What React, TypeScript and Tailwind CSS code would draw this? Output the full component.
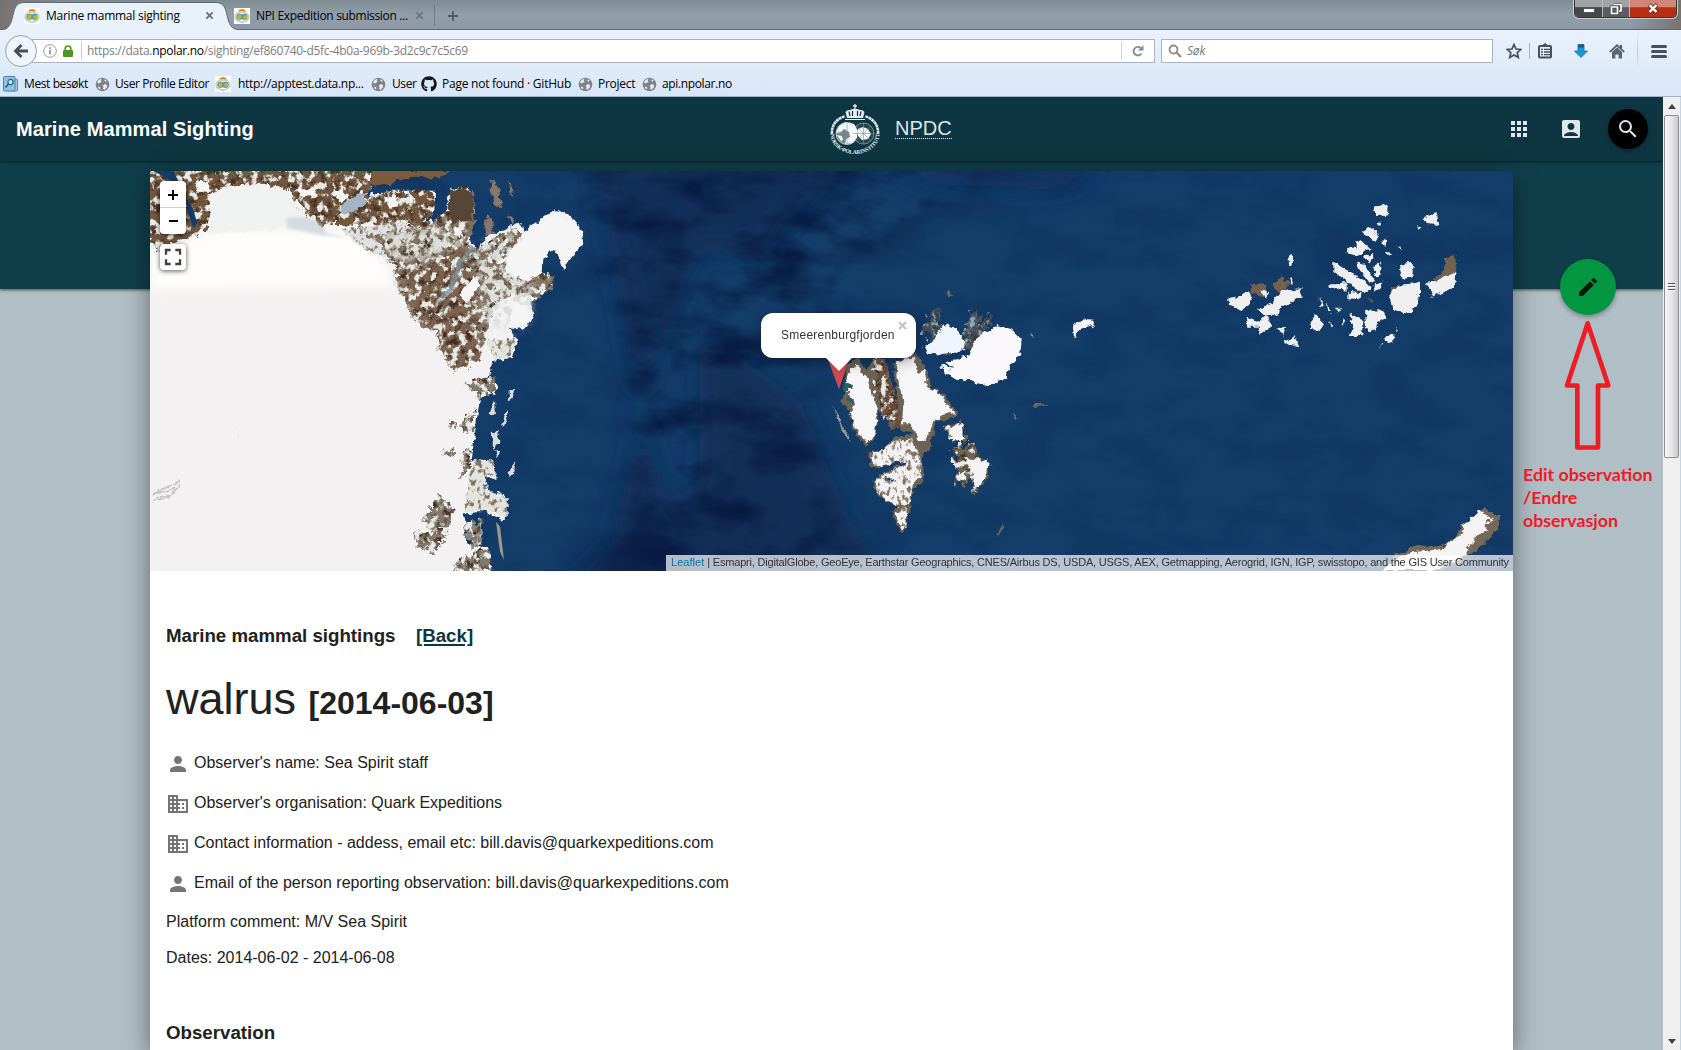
import React from "react";
import { MdPerson, MdBusiness, MdApps, MdAccountBox, MdSearch, MdEdit, MdFullscreen } from "react-icons/md";
import { FaGithub } from "react-icons/fa";

const Crest = () => (
  <svg viewBox="0 0 16 16" className="h-4 w-4 shrink-0">
    <rect width="16" height="16" fill="#fff" />
    <path d="M5 4.5L4.5 2 8 1l3.5 1L11 4.5z" fill="#c98d2c" />
    <path d="M2 12C-1 6 4 3.5 8 3.8S17 6 14 12" fill="none" stroke="#d8cfa0" strokeWidth="1.6" />
    <path d="M2 11.500Q8 17 14 11.500" fill="none" stroke="#b9bdbd" strokeWidth="1.200" />
    <circle cx="5.500" cy="8.800" r="3.200" fill="#4f9fc0" />
    <circle cx="10.500" cy="8.800" r="3.200" fill="#4f9fc0" />
    <path d="M4 7l3-.5.5 3-2 2-2-1zM9 9l2-2 2 1-.5 2.500-2 .5z" fill="#d5b21f" />
  </svg>
);

const Globe = () => (
  <svg viewBox="0 0 16 16" className="h-[15px] w-[15px] shrink-0">
    <circle cx="8" cy="8" r="7.300" fill="#7f8488" />
    <path d="M2.500 4.500l3-2.500 1.500.5-1 1.500 1 1-2 1.500-2 .5zM9 8.500l2-1 2 1.500-.5 2.500-2.500 2-1.500-1 .8-1.800-1-.8zM10.500 2.500l2 1.500-1 1-1.500-1zM3 10l2.500 1v2l-1.500-.5z" fill="#e9eef3" />
  </svg>
);

const CloseX = () => (
  <svg viewBox="0 0 10 10" className="h-[9px] w-[9px] shrink-0">
    <path d="M1.500 1.500l7 7M8.500 1.500l-7 7" stroke="#6b7681" strokeWidth="2.200" />
  </svg>
);

function TabStrip() {
  return (
    <div className="relative flex h-[30px] items-start bg-linear-to-b from-[#7f8b91] via-[#929eaa] to-[#8c98a4]">
      <svg viewBox="0 0 1681 30" className="absolute inset-0 h-[30px] w-[1681px]">
        <defs>
          <linearGradient id="edge">
            <stop offset="0" stopColor="#77726f" />
            <stop offset="1" stopColor="#77726f" stopOpacity="0" />
          </linearGradient>
        </defs>
        <rect width="70" height="30" fill="url(#edge)" />
        <rect x="-1681" width="50" height="30" fill="url(#edge)" transform="scale(-1 1)" />
        <path d="M0 29.500H1681" stroke="#5f686f" />
        <path d="M0 30.500C10 29.500 11 23 13 15C15 6 17 2.500 25 2.500H215C223 2.500 225 6 227 15C229 24 231 29.500 239 29.500V31H0Z" fill="#e9f1fb" stroke="#5f6b76" />
      </svg>
      <div className="relative flex h-[30px] w-[434px] items-center pl-6 pt-px text-[12px]">
        <Crest />
        <span className="ml-[6px] w-[159px] whitespace-nowrap tracking-[-0.25px]">Marine mammal sighting</span>
        <CloseX />
        <div className="ml-5 flex items-center">
          <Crest />
          <span className="ml-[6px] w-[159px] whitespace-nowrap tracking-[-0.33px]">NPI Expedition submission ...</span>
          <CloseX />
        </div>
      </div>
      <div className="relative mt-[5px] h-[21px] w-px bg-[#6f7a85]" />
      <svg viewBox="0 0 10 10" className="relative ml-[13px] mt-[11px] h-[10px] w-[10px]">
        <path d="M5 0v10M0 5h10" stroke="#4f5a65" strokeWidth="1.800" />
      </svg>
      <div className="absolute right-[4px] top-0 flex h-[18px] w-[103px] overflow-hidden rounded-b-[5px] border border-t-0 border-[#33363a] shadow-[0_0_0_1px_#c5ccd2]">
        <div className="flex w-[28px] items-end justify-center border-r border-[#b9bcbf] bg-linear-to-b from-[#a0a3a6] from-40% to-[#45484b] to-45% pb-[4px]">
          <div className="h-[5px] w-[12px] border border-[#555] bg-white" />
        </div>
        <div className="flex w-[27px] items-center justify-center border-r border-[#b9bcbf] bg-linear-to-b from-[#a0a3a6] from-40% to-[#5b5e61] to-45%">
          <svg viewBox="0 0 12 12" className="h-3 w-3">
            <path d="M4 1h7v7h-2M1 4h7v7H1z" fill="none" stroke="#444" strokeWidth="2.800" />
            <path d="M4 1.500h7v6.500h-2M1.500 4h6v6.500h-6z" fill="none" stroke="#fff" strokeWidth="1.700" />
          </svg>
        </div>
        <div className="flex flex-1 items-center justify-center bg-linear-to-b from-[#d08778] from-40% to-[#b92d12] to-45%">
          <svg viewBox="0 0 12 11" className="h-[11px] w-3">
            <path d="M2 1.500l8 8M10 1.500l-8 8" stroke="#543" strokeWidth="4" />
            <path d="M2.500 2l7 7M9.500 2l-7 7" stroke="#fff" strokeWidth="2.400" />
          </svg>
        </div>
      </div>
    </div>
  );
}

function NavBar() {
  return (
    <div className="flex h-[41px] items-center pr-[14px] pt-px">
      <div className="relative z-10 ml-[5px] flex h-8 w-8 shrink-0 items-center justify-center rounded-full border border-[#8ea1b8] bg-[#f0f5fc]">
        <svg viewBox="0 0 16 16" className="h-4 w-4">
          <path d="M15 8H3M8.500 2L2.500 8l6 6" fill="none" stroke="#44505c" strokeWidth="2.800" />
        </svg>
      </div>
      <div className="-ml-[5px] flex h-6 w-[1123px] items-center border border-[#a5b6cb] bg-white pl-[10px]">
        <svg viewBox="0 0 14 14" className="h-[14px] w-[14px] shrink-0">
          <circle cx="7" cy="7" r="6.300" fill="none" stroke="#999" />
          <path d="M7 6v4.500M7 3.300v1.600" stroke="#888" strokeWidth="1.600" />
        </svg>
        <svg viewBox="0 0 10 12" className="ml-[6px] h-3 w-[10px] shrink-0">
          <path d="M2.200 6V3.500a2.800 2.500 0 0 1 5.600 0V6" fill="none" stroke="#4a9a1e" strokeWidth="1.700" />
          <rect y="5" width="10" height="7" rx="1" fill="#4a9a1e" />
        </svg>
        <div className="ml-2 h-[18px] w-px bg-[#ccc]" />
        <span className="ml-[5px] flex-1 whitespace-nowrap text-[12px] tracking-[-0.3px] text-[#7d7d7d]">
          https://data.<span className="text-black">npolar.no</span>/sighting/ef860740-d5fc-4b0a-969b-3d2c9c7c5c69
        </span>
        <div className="h-[18px] w-px bg-[#ccd3da]" />
        <svg viewBox="0 0 12 12" className="mx-[10px] h-3 w-3">
          <path d="M9.500 8.500A4.300 4.300 0 1 1 9 3.200" fill="none" stroke="#7f8c99" strokeWidth="1.900" />
          <path d="M11.500 0v5.500H6z" fill="#7f8c99" />
        </svg>
      </div>
      <div className="ml-[6px] flex h-6 w-[332px] items-center border border-[#a5b6cb] bg-white pl-[6px]">
        <svg viewBox="0 0 14 14" className="h-[14px] w-[14px]">
          <circle cx="5.500" cy="5.500" r="4" fill="none" stroke="#8b8b8b" strokeWidth="1.800" />
          <path d="M8.500 8.500l4.500 4.500" stroke="#8b8b8b" strokeWidth="2.200" />
        </svg>
        <span className="ml-[5px] text-[12px] italic tracking-[-0.2px] text-[#777]">Søk</span>
      </div>
      <svg viewBox="0 0 16 16" className="ml-[13px] h-4 w-4">
        <path d="M8 1.500l2 4.500 4.800.5-3.600 3.200 1.100 4.800L8 12l-4.300 2.500 1.100-4.800L1.200 6.500 6 6z" fill="none" stroke="#44505c" strokeWidth="1.700" />
      </svg>
      <div className="ml-[7px] h-4 w-px bg-[#a9b5c3]" />
      <svg viewBox="0 0 14 16" className="ml-[8px] h-4 w-[14px]">
        <path d="M4.500 3V2L7 0l2.500 2v1z" fill="#44505c" />
        <rect x="1" y="3" width="12" height="11.500" rx="1" fill="none" stroke="#44505c" strokeWidth="2" />
        <path d="M3 6.300h2M6 6.300h6M3 9h2M6 9h6M3 11.700h2M6 11.700h6" stroke="#44505c" strokeWidth="1.300" />
      </svg>
      <svg viewBox="0 0 14 14" className="ml-[22px] h-[14px] w-[14px]">
        <path d="M4 .5h6V7h3.500L7 13.500.5 7H4z" fill="#149ad9" stroke="#17719f" strokeWidth=".8" />
        <path d="M4 .5h6v3H4z" fill="#11617f" />
      </svg>
      <svg viewBox="0 0 16 15" className="ml-[21px] h-[15px] w-4">
        <path d="M.8 8L8 1.200 15.200 8" fill="none" stroke="#4c5864" strokeWidth="1.700" />
        <path d="M3 8l5-4.700L13 8v6.500H9.600v-4H6.400v4H3z" fill="#5a6672" />
        <path d="M11 1h2v3h-2z" fill="#4c5864" />
      </svg>
      <div className="ml-[12px] h-[38px] w-px bg-linear-to-b from-transparent via-[#b9c6d6] to-transparent" />
      <div className="ml-[13px] flex w-4 flex-col gap-[2px]">
        <div className="h-[3px] rounded-full bg-[#44505c]" />
        <div className="h-[3px] rounded-full bg-[#44505c]" />
        <div className="h-[3px] rounded-full bg-[#44505c]" />
      </div>
    </div>
  );
}

function Bookmarks() {
  return (
    <div className="flex h-[26px] items-center whitespace-nowrap pl-[3px] text-[12px] tracking-[-0.26px]">
      <svg viewBox="0 0 15 16" className="h-4 w-[15px] shrink-0">
        <rect x="4" y="3" width="10.500" height="12" rx="1" fill="#9fc4df" stroke="#5d92b8" />
        <rect x=".5" y=".5" width="11.500" height="14.500" rx="1" fill="#8fc3e4" stroke="#4a85ae" />
        <circle cx="7.500" cy="6" r="2.600" fill="#cfe8f8" stroke="#2d6288" strokeWidth="1.200" />
        <path d="M5.500 8L2.500 11.500" stroke="#2d6288" strokeWidth="1.700" />
      </svg>
      <span className="ml-[6px] w-[71px] tracking-[-0.4px]">Mest besøkt</span>
      <Globe />
      <span className="ml-[5px] w-[100px] tracking-[-0.42px]">User Profile Editor</span>
      <Crest />
      <span className="ml-[7px] w-[133px] tracking-[-0.3px]">http://apptest.data.np...</span>
      <Globe />
      <span className="ml-[6px] w-[29px] tracking-[-0.4px]">User</span>
      <FaGithub className="h-4 w-4 shrink-0 text-[#191717]" />
      <span className="ml-[5px] w-[136px] tracking-[-0.24px]">Page not found · GitHub</span>
      <Globe />
      <span className="ml-[5px] w-[44px]">Project</span>
      <Globe />
      <span className="ml-[5px] tracking-[-0.36px]">api.npolar.no</span>
    </div>
  );
}

const Emblem = () => (
  <svg viewBox="0 0 50 52" className="h-[52px] w-[50px] overflow-visible">
    <path d="M25 1v6M23 3h4" stroke="#e6eced" strokeWidth="1.300" />
    <path d="M17 15L15.500 9Q17 6.500 20 7Q25 4.500 30 7Q33 6.500 34.500 9L33 15z" fill="#e6eced" />
    <path d="M19 8.500l1 4.500M22.500 8v5M27.500 8v5M31 8.500l-1 4.500" stroke="#0d3642" strokeWidth="1.200" />
    <path d="M2 31C1 22 8 14.500 15 13.500M48 31C49 22 42 14.500 35 13.500" fill="none" stroke="#dde5e7" strokeWidth="2.600" strokeDasharray="3 .4" />
    <path d="M15 16.500h20" stroke="#e6eced" />
    <circle cx="17" cy="30.500" r="11" fill="#6d868d" stroke="#dfe6e8" strokeWidth=".8" />
    <circle cx="33.500" cy="30.500" r="10.500" fill="#24474f" stroke="#8ea3a8" strokeWidth=".8" />
    <path d="M9 23L15 19.500l9 1.500 4 7-1 7-5 5-7 1 1-5 4-2-1-5-5-3-3 3-5 1zM7 32l5 1 1 4-2 1z" fill="#f6f8f8" />
    <path d="M28 26l5-2 5 2 3 5-3 5-6 1-4-4z" fill="#f6f8f8" />
    <path d="M33.500 20v21M23 30.500h21M26 23l15 15M41 23l-15 15M17 20v21M6 30.500h11" stroke="#7d969c" strokeWidth=".6" />
    <path id="ring" d="M.5 31A24.500 20 0 0 0 49.500 31" fill="none" />
    <text fill="#e6eced" fontFamily="Liberation Serif" fontWeight="bold" fontSize="5.600" textLength="70">
      <textPath href="#ring">NORSK•POLARINSTITUTT</textPath>
    </text>
  </svg>
);

function SatelliteMap() {
  return (
    <svg viewBox="150 171 1363 400" className="absolute inset-0 h-[400px] w-[1363px]">
      <defs>
        <filter id="coast" x="-8%" y="-8%" width="116%" height="116%" colorInterpolationFilters="sRGB">
          <feTurbulence type="fractalNoise" baseFrequency=".05" numOctaves="3" seed="4" result="n" />
          <feDisplacementMap in="SourceGraphic" in2="n" scale="22" xChannelSelector="R" yChannelSelector="G" result="d" />
          <feGaussianBlur in="d" stdDeviation="1.200" />
        </filter>
        <filter id="rock" x="-10%" y="-10%" width="120%" height="120%" colorInterpolationFilters="sRGB">
          <feTurbulence type="fractalNoise" baseFrequency=".045" numOctaves="4" seed="9" result="n" />
          <feDisplacementMap in="SourceGraphic" in2="n" scale="50" xChannelSelector="R" yChannelSelector="G" result="d" />
          <feColorMatrix in="n" values="0 0 0 0 .9  0 0 0 0 .92  0 0 0 0 .91  7 0 0 0 -3.600" result="w" />
          <feComposite in="w" in2="d" operator="in" result="wi" />
          <feColorMatrix in="n" values="0 0 0 0 .27  0 0 0 0 .18  0 0 0 0 .12  0 4 0 0 -1.900" result="k" />
          <feComposite in="k" in2="d" operator="in" result="ki" />
          <feMerge><feMergeNode in="d" /><feMergeNode in="ki" /><feMergeNode in="wi" /></feMerge>
        </filter>
        <filter id="mist" x="-10%" y="-10%" width="120%" height="120%" colorInterpolationFilters="sRGB">
          <feTurbulence type="fractalNoise" baseFrequency=".05" numOctaves="4" seed="31" result="n" />
          <feColorMatrix in="n" values="0 0 0 0 .85  0 0 0 0 .87  0 0 0 0 .86  6 0 0 0 -2.500" result="w" />
          <feGaussianBlur in="SourceGraphic" stdDeviation="14" result="s" />
          <feComposite in="w" in2="s" operator="in" />
        </filter>
        <filter id="snow" x="-10%" y="-10%" width="120%" height="120%" colorInterpolationFilters="sRGB">
          <feTurbulence type="fractalNoise" baseFrequency=".07 .05" numOctaves="4" seed="21" result="n" />
          <feDisplacementMap in="SourceGraphic" in2="n" scale="22" xChannelSelector="R" yChannelSelector="G" result="d" />
          <feColorMatrix in="n" values="0 0 0 0 .5  0 0 0 0 .45  0 0 0 0 .39  0 6 0 0 -3.100" result="k" />
          <feComposite in="k" in2="d" operator="in" result="ki" />
          <feMerge><feMergeNode in="d" /><feMergeNode in="ki" /></feMerge>
        </filter>
        <filter id="sea" x="0" y="0" width="100%" height="100%" colorInterpolationFilters="sRGB">
          <feTurbulence type="fractalNoise" baseFrequency=".016 .03" numOctaves="4" seed="3" />
          <feColorMatrix values="0 0 0 0 .02  0 0 0 0 .09  0 0 0 0 .24  2.500 0 0 0 -1.050" />
        </filter>
        <filter id="b14" x="-50%" y="-50%" width="200%" height="200%"><feGaussianBlur stdDeviation="14" /></filter>
        <filter id="b6" x="-50%" y="-50%" width="200%" height="200%"><feGaussianBlur stdDeviation="5" /></filter>
        <mask id="deep"><rect x="150" y="171" width="1363" height="400" fill="#2a2a2a" /><path d="M570 160H1000L860 260 800 400 850 571H620L640 400z" fill="#ddd" filter="url(#b14)" /></mask>
      </defs>
      <rect x="150" y="171" width="1363" height="400" fill="#143d6a" />
      <g filter="url(#b14)">
        <path d="M590 150H870L800 210 760 260 700 250 640 400 690 590H600L640 420 620 300z" fill="#0c2a56" opacity=".7" />
        <path d="M700 330L800 400 850 520 900 590H580L700 480z" fill="#0b2750" opacity=".6" />
        <path d="M880 160H1110L1060 190 930 185z" fill="#0d2b58" opacity=".8" />
        <path d="M560 590L640 520 740 600z" fill="#0a2248" opacity=".8" />
      </g>
      <rect x="150" y="171" width="1363" height="400" filter="url(#sea)" mask="url(#deep)" />
      <g transform="translate(140 160) scale(.33333)">
        <path filter="url(#coast)" fill="#f3f1f1" d="M0 0H690L690 80L680 115L740 95H885L883 150L835 205L860 205L920 155L930 90L990 80L1003 130L1000 180L985 240L1015 265L1035 235L1100 205L1140 190L1150 215L1200 180L1250 150L1290 165L1325 210L1330 250L1285 300L1270 330L1255 285L1240 265L1210 300L1208 335L1235 350L1238 380L1200 410L1165 430L1183 460L1165 500L1110 510L1132 540L1115 595L1060 600L1045 650L1070 675L1065 700L1020 715L1010 780L995 900L1060 905L1073 960L1030 940L1040 980L1060 1005L1075 995L1100 1015V1070L1085 1080L1040 1055L975 1060L970 1110L980 1150L1045 1165L1055 1270H0z" />
        <path fill="#fffdfb" d="M240 210H640L740 320 760 380 30 390V270z" filter="url(#b14)" />
        <path filter="url(#rock)" fill="#72563d" d="M0 0H690V80L680 120L740 95H880V155L835 205 760 190 640 195 530 190 480 140 440 85 350 75 210 100 205 200 140 235 60 270 20 250z" />
        <path d="M230 85Q330 60 440 95L480 160 400 210 200 220z" fill="#eff2f1" filter="url(#coast)" />
        <path d="M600 210L760 190 830 205 820 260 740 290 690 280z" fill="#dfe2e0" filter="url(#snow)" />
        <path d="M40 33H100L160 150 172 190 160 205 145 160 130 100 90 60z" fill="#143c69" />
        <path d="M440 175Q540 160 560 220L640 235 540 225 440 205z" fill="#c5d3d8" opacity=".7" filter="url(#b6)" />
        <path d="M605 130L680 95 670 140 610 165z" fill="#a3b4c4" filter="url(#coast)" />
        <path filter="url(#coast)" fill="#f6f6f6" d="M470 85L530 85 520 110 490 115zM165 65L205 60 215 95 175 95z" />
        <path filter="url(#rock)" fill="#83725f" d="M700 230L840 200 930 150 935 90 995 85 1003 180 980 260 1020 270 1100 210 1150 220 1080 300 1120 330 1240 350 1235 385 1180 415 1120 400 1060 430 1040 520 1020 600 940 635 900 570 890 510 830 490 780 400 760 320z" />
        <path filter="url(#coast)" fill="#574536" d="M925 95L990 85 1003 130 995 185 960 180 930 195z" />
        <path filter="url(#rock)" fill="#7a5a45" d="M790 320L860 315 960 260 1000 400 1020 590 940 630 900 570 890 510 840 480 790 400z" opacity=".6" />
        <path filter="url(#mist)" fill="#fff" d="M720 215L900 200 980 240 900 290 760 300zM1010 260L1130 220 1180 400 1160 500 1040 500 1020 380z" />
        <path d="M1000 260L960 310 930 390 900 420" stroke="#8094a3" strokeWidth="14" fill="none" filter="url(#coast)" opacity=".8" />
        <path filter="url(#coast)" fill="#f5f5f5" d="M1110 270L1150 235 1250 155 1325 215 1325 250 1285 295 1235 260 1205 300 1200 345 1160 365 1090 330zM960 400L1000 350 1025 370 980 430zM1120 430L1165 440 1170 490 1110 495zM735 115L760 100 780 130 750 150zM575 95L610 85 625 110 600 125zM940 205L960 200 970 225 950 235z" />
        <path filter="url(#coast)" fill="#7b5b3a" d="M690 30H935L905 52 790 55 750 72 692 75z" />
        <path filter="url(#snow)" fill="#e4e4df" d="M1040 540L1130 535 1112 590 1060 600zM1005 900H1060L1070 955 1030 945 1040 990 1100 1015V1070L1040 1050 975 1055 985 960z" />
        <path filter="url(#rock)" fill="#847a6c" d="M970 670L1060 650 1070 690 1020 712zM925 790L945 780 940 815zM960 790L1005 755 995 810 965 820zM905 865L945 870 940 895 915 890zM975 870L995 855 985 940 955 965zM870 1040L900 1005 935 1040 930 1100 880 1110 845 1085zM820 1130L880 1110 920 1120 880 1180 830 1160zM950 1200L1040 1165 1055 1235 940 1230z" />
        <path filter="url(#rock)" fill="#8b857a" d="M980 1085L1030 1080 1030 1150 990 1160 970 1120z" />
        <path filter="url(#coast)" fill="#8c7668" d="M1055 55L1075 75 1085 140 1070 140 1052 95zM1105 55L1112 65 1120 112 1112 105zM1040 165L1055 175 1062 220 1035 230zM1105 160L1125 180 1118 195z" />
        <path filter="url(#coast)" fill="#dcdcd8" d="M1105 690L1122 690 1118 715 1108 718zM1062 720L1065 765 1048 765zM1100 750L1105 765 1090 800 1085 790zM1125 910L1122 945 1105 952 1103 935zM1055 820L1075 810 1078 850 1060 870zM1065 870L1080 870 1075 900z" />
        <path fill="#9b9a8e" d="M1068 1085L1080 1100 1092 1200 1080 1175z" />
        <path d="M35 1005L120 960M35 1025L90 1010 120 975M55 1000L105 985" stroke="#c4c4c4" strokeWidth="5" fill="none" filter="url(#coast)" />
        <path d="M285 800L295 805 295 835" stroke="#f1ead7" strokeWidth="4" fill="none" />
      </g>
      <g transform="translate(740 290) scale(.33333)">
        <path filter="url(#coast)" fill="#6d6354" d="M320 230L350 200 380 240 400 205 435 205 455 280 475 340 460 215 530 190 560 240 570 290 610 310 630 345 652 365 640 385 590 390 570 480 550 490 550 580 520 590 510 650 485 730 455 670 470 650 410 615 400 570 430 550 395 530 385 490 430 480 460 440 520 435 485 425 480 395 455 420 415 360 405 450 375 468 340 420 330 370 305 335z" />
        <path filter="url(#coast)" fill="#f6f5f8" d="M330 240L350 225 385 265 400 320 410 350 405 440 380 460 345 415 332 370 350 340 310 290zM465 215L525 200 535 250 555 240 560 290 600 310 615 340 645 365 580 390 560 450 535 450 510 400 485 400 490 350z" />
        <path filter="url(#snow)" fill="#f3f1f1" d="M392 485L420 485 455 455 515 445 540 500 545 560 520 575 505 640 475 650 415 610 405 570 440 550 500 520 460 520 400 530zM462 670L500 650 500 710 485 720z" />
        <path filter="url(#rock)" fill="#6d4f3d" d="M400 205L430 205 455 290 475 350 475 400 455 410 415 350 405 300z" />
        <path filter="url(#coast)" fill="#143c69" d="M400 540L470 515 500 520 430 545zM420 560L470 580 460 570zM415 400L440 375 450 420 520 430 410 455z" />
        <path filter="url(#rock)" fill="#6d6354" d="M540 120L585 50 605 60 600 100 670 140 690 60 715 60 715 110 750 65 755 100 690 180 560 190 570 140z" opacity=".6" />
        <path filter="url(#coast)" fill="#eef5fc" d="M555 175L580 150 610 100 640 110 675 150 672 180 620 190 570 195z" />
        <path filter="url(#coast)" fill="#fbf8fb" d="M615 215L680 200 710 145 770 105 820 120 845 150 840 195 805 235 800 265 740 290 690 270 650 270 610 245 600 225 640 240z" />
        <path filter="url(#coast)" fill="#24615f" d="M305 285L330 275 335 300 310 300zM320 325L345 330 335 345z" />
        <path filter="url(#rock)" fill="#6c6455" d="M615 410L665 400 678 450 635 455zM635 480L690 455 715 475 705 510 748 505 740 570 695 615 700 565 640 585 650 530z" />
        <path filter="url(#coast)" fill="#f4f2f2" d="M630 415L665 405 670 450 640 450zM670 505L745 510 735 570 700 600 705 560 690 530zM645 560L680 540 675 570z" />
        <path filter="url(#coast)" fill="#a59a8d" d="M282 350L300 385 325 440 330 460 312 430 290 380zM870 130L882 135 878 145z" />
        <path filter="url(#coast)" fill="#6f6960" d="M822 360L838 385 825 380zM870 355L890 335 925 350 880 350zM785 705L792 710 770 740zM620 5L645 15 625 22z" />
        <path filter="url(#coast)" fill="#f6f4f4" d="M998 104L1026 88 1062 92 1060 108 1020 120 1002 142z" />
        <path fill="#cf4a4c" d="M262 204H329L297 298z" />
      </g>
      <g transform="translate(1200 180) scale(.33333)" >
        <path filter="url(#coast)" fill="#74614e" d="M150 310L200 315 190 350 155 340zM222 310L245 290 270 310 240 340 220 330zM735 235L760 225 772 250 765 290 700 300 735 270zM500 355L520 360 515 372zM575 325L600 310 580 360z" />
        <path filter="url(#coast)" fill="#f0eff0" d="M525 80L565 70V102L525 110zM668 115L710 100 718 135 675 132zM652 138L665 145 655 152zM485 155L505 140 540 170 525 185 485 165zM535 125L543 125 540 137zM545 178L562 180 560 197 545 195zM470 180L490 185 512 205 470 230 440 220 442 200 470 205zM490 230L520 215 510 245zM588 200H605V212zM555 215L575 220 560 225zM400 245L430 265 470 285 510 320 490 340 445 310 400 275zM470 245L500 265 525 300 510 310 480 270zM520 260L540 245 542 285 525 285zM600 260L630 240 642 255 635 290 605 295zM525 310L550 305 545 332 522 328zM388 310L440 310 440 335 390 322zM445 335L485 340 480 358 445 355zM570 340L600 318 660 305 660 350 635 400 580 390zM680 310L740 290 770 275 765 320 700 350zM265 230L280 228 278 250 268 255zM265 300L278 292 275 315zM80 360L150 330 155 360 125 392 85 370zM180 330L200 335 202 358zM170 390L220 365 250 330 305 325 300 350 240 385 235 410 200 405zM140 410L180 425 200 405 215 440 175 468 180 440 145 440zM235 445L258 440 250 470zM255 485L280 465 295 498 270 495zM330 430L350 405 375 430 360 450 330 440zM360 350L368 385 358 380zM380 365L395 395 385 395zM405 380L420 380 410 402zM388 425L398 440 390 440zM428 420L435 425 425 435zM450 400L490 420V465H450L460 430zM495 390L540 388 560 415 530 430 515 460 498 440zM555 465L580 465 580 490 560 492zM590 440L595 450 588 452zM540 485L548 495 542 500z" />
      </g>
      <g transform="translate(640 500) scale(.574 .33333)">
        <path filter="url(#coast)" fill="#77695a" d="M1300 213L1320 160 1350 135 1400 140 1440 70 1470 25 1495 50 1490 100 1460 150 1400 213z" />
        <path filter="url(#coast)" fill="#f5f3f4" d="M1290 213L1330 165 1400 145 1435 90 1445 50 1465 35 1480 50 1475 90 1440 140 1440 165 1380 213z" />
        <path fill="#6b6a62" d="M632 70L634 85 620 115z" opacity=".7" />
      </g>
    </svg>
  );
}

function MapPanel() {
  return (
    <div className="relative h-[400px] w-[1363px] overflow-hidden">
      <SatelliteMap />
      <div className="absolute left-[10px] top-[10px] h-[53px] w-[26px] rounded-[4px] bg-white shadow-[0_1px_5px_rgba(0,0,0,0.65)]">
        <div className="flex h-[27px] items-center justify-center border-b border-[#ccc] pt-px">
          <svg viewBox="0 0 10 10" className="h-[10px] w-[10px]"><path d="M5 0v10M0 5h10" stroke="#000" strokeWidth="2" /></svg>
        </div>
        <div className="flex h-[26px] items-center justify-center">
          <div className="h-[2px] w-[9px] bg-black" />
        </div>
      </div>
      <div className="absolute left-[10px] top-[73px] flex h-[26px] w-[26px] items-center justify-center rounded-[4px] bg-white shadow-[0_1px_5px_rgba(0,0,0,0.65)]">
        <MdFullscreen className="h-[28px] w-[28px] shrink-0 text-[#404040]" />
      </div>
      <div className="absolute left-[611px] top-[142px] h-[45px] w-[155px] rounded-[12px] bg-white pl-5 pt-[14px] text-[12px] leading-[17px] tracking-[0.24px] text-[#333] shadow-[0_3px_14px_rgba(0,0,0,0.4)]">
        Smeerenburgfjorden
        <svg viewBox="0 0 9 9" className="absolute right-[9px] top-[8px] h-[9px] w-[9px]"><path d="M1 1l7 7M8 1L1 8" stroke="#c3c3c3" strokeWidth="2" /></svg>
        <svg viewBox="0 0 26 13" className="absolute left-[65px] top-[45px] h-[13px] w-[26px]"><path d="M0 0H26L13 13z" fill="#fff" /></svg>
      </div>
      <div className="absolute bottom-0 right-0 h-[16px] w-[847px] whitespace-nowrap bg-white/70 pl-[5px] text-[11px] leading-[15px] tracking-[-0.19px] text-[#333]">
        <span className="tracking-[0.05px] text-[#0078a8]">Leaflet</span> | Esmapri, DigitalGlobe, GeoEye, Earthstar Geographics, CNES/Airbus DS, USDA, USGS, AEX, Getmapping, Aerogrid, IGN, IGP, swisstopo, and the GIS User Community
      </div>
    </div>
  );
}

const details = [
  { Icon: MdPerson, text: "Observer's name: Sea Spirit staff" },
  { Icon: MdBusiness, text: "Observer's organisation: Quark Expeditions" },
  { Icon: MdBusiness, text: "Contact information - addess, email etc: bill.davis@quarkexpeditions.com" },
  { Icon: MdPerson, text: "Email of the person reporting observation: bill.davis@quarkexpeditions.com" },
];

function Card() {
  return (
    <div className="relative ml-[150px] h-[879px] w-[1363px] overflow-visible bg-white shadow-[0_6px_24px_rgba(0,0,0,0.45)]">
      <MapPanel />
      <div className="px-4 pt-[51px] text-[16px] text-[#212121]">
        <h3 className="flex h-7 text-[18.700px] font-bold leading-7">
          <span className="w-[250px]">Marine mammal sightings</span>
          <a className="text-[#0d3642] underline decoration-2 underline-offset-2">[Back]</a>
        </h3>
        <h1 className="mt-[19px] h-[60px] whitespace-nowrap text-[45px] leading-[60px]">
          walrus <span className="text-[32px] font-bold">[2014-06-03]</span>
        </h1>
        <div className="mt-[13px]">
          {details.map(({ Icon, text }) => (
            <div key={text} className="flex h-10 items-center">
              <Icon className="mt-1 h-6 w-6 text-[#757575]" />
              <span className="ml-1 pt-[2px]">{text}</span>
            </div>
          ))}
        </div>
        <p className="mt-[2px] h-9 leading-9">Platform comment: M/V Sea Spirit</p>
        <p className="h-9 leading-9">Dates: 2014-06-02 - 2014-06-08</p>
        <h3 className="mt-[43px] text-[18.700px] font-bold leading-7">Observation</h3>
      </div>
    </div>
  );
}

function Scrollbar() {
  return (
    <div className="flex w-[18px] shrink-0 flex-col items-center border-r border-[#c4d3e4] bg-[#efefef]">
      <div className="flex h-[18px] items-center">
        <svg viewBox="0 0 8 5" className="h-[5px] w-2"><path d="M4 0l4 5H0z" fill="#404040" /></svg>
      </div>
      <div className="flex h-[343px] w-[15px] flex-col items-center justify-center gap-px rounded-[2px] border border-[#8f8f8f] bg-linear-to-r from-[#f6f6f6] via-[#e7e7e9] to-[#c9c9cd]">
        <div className="h-[2px] w-[7px] border-b border-white bg-[#555]" />
        <div className="h-[2px] w-[7px] border-b border-white bg-[#555]" />
        <div className="h-[2px] w-[7px] border-b border-white bg-[#555]" />
      </div>
      <div className="mb-[6px] mt-auto">
        <svg viewBox="0 0 8 5" className="h-[5px] w-2"><path d="M0 0h8L4 5z" fill="#404040" /></svg>
      </div>
    </div>
  );
}

export default function App() {
  return (
    <div className="flex h-[1050px] w-[1681px] flex-col overflow-hidden bg-[#b0bec5] font-['Liberation_Sans',Arial,sans-serif]">
      <div className="font-['Open_Sans','Noto_Sans',sans-serif] text-black">
        <TabStrip />
        <div className="h-[67px] border-b border-[#9db1cb] bg-linear-to-b from-[#e9f1fb] to-[#d8e6f7]">
          <NavBar />
          <Bookmarks />
        </div>
      </div>
      <div className="flex h-[953px]">
        <div className="relative w-[1663px] overflow-hidden bg-[#b0bec5]">
          <div className="absolute inset-x-0 top-0 h-[192px] bg-[#103f4c] shadow-[0_1px_3px_rgba(0,0,0,0.6)]" />
          <header className="relative flex h-[64px] items-center bg-[#0d3642] pl-4 pr-[15px] text-[20px] shadow-[0_1px_3px_rgba(0,0,0,0.5)]">
            <span className="w-[814px] font-bold tracking-[0.1px] text-white">Marine Mammal Sighting</span>
            <Emblem />
            <span className="ml-[15px] mb-[5px] h-[25px] border-b border-dotted border-white leading-[29px] text-[#dfe6e8]">NPDC</span>
            <div className="ml-auto flex items-center text-[#dfe6e8]">
              <MdApps className="h-6 w-6" />
              <MdAccountBox className="ml-[28px] h-6 w-6" />
              <div className="ml-[25px] flex h-10 w-10 items-center justify-center rounded-full bg-black shadow-[0_2px_5px_rgba(0,0,0,0.3)]">
                <MdSearch className="h-6 w-6" />
              </div>
            </div>
          </header>
          <div className="mt-[10px]">
            <Card />
          </div>
          <div className="absolute left-[1560px] top-[162px] flex h-14 w-14 items-center justify-center rounded-full bg-[#039640] shadow-[0_2px_5px_rgba(0,0,0,0.35)]">
            <MdEdit className="h-6 w-6 text-[#06180c]" />
          </div>
          <svg viewBox="250 270 150 392" className="absolute left-[1563px] top-[223px] h-[131px] w-[50px]">
            <path d="M324 280L386 466H355V652H293V466H262z" fill="none" stroke="#ee1c24" strokeWidth="14" strokeLinejoin="round" />
          </svg>
          <div className="absolute left-[1523px] top-[366px] w-[140px] whitespace-nowrap font-['Lato','Open_Sans',sans-serif] text-[17.800px] font-bold leading-[23px] text-[#ee1c24]">
            Edit observation
            <br />
            /Endre
            <br />
            observasjon
          </div>
        </div>
        <Scrollbar />
      </div>
    </div>
  );
}
